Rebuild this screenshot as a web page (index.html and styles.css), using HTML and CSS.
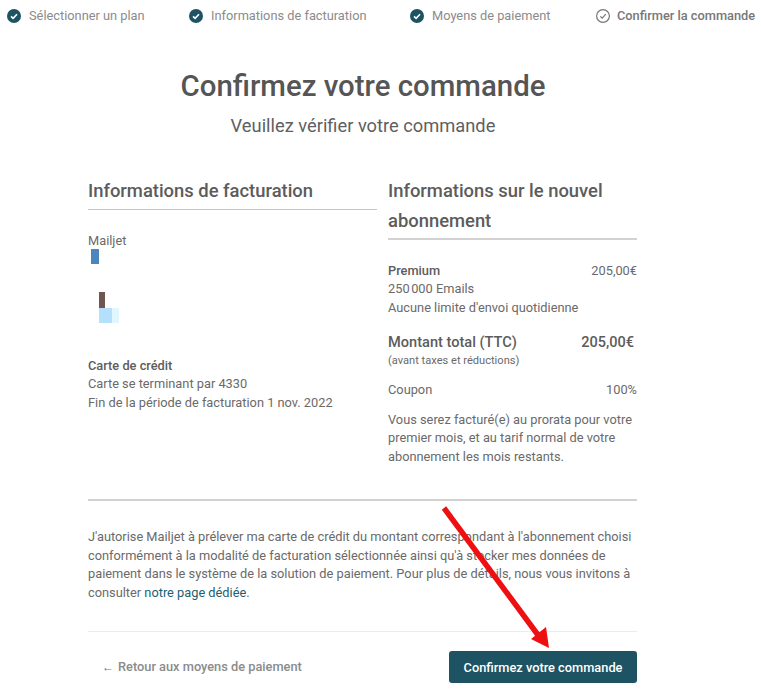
FILE: index.html
```html
<!DOCTYPE html>
<html lang="fr">
<head>
<meta charset="utf-8">
<title>Confirmez votre commande</title>
<link rel="stylesheet" href="styles.css">
</head>
<body>
<nav class="stepper">
  <div class="step s1"><svg class="ic" viewBox="0 0 14 14"><circle cx="7" cy="7" r="7" fill="#1d5362"/><path d="M4 7.3l2.1 2L10 5.2" fill="none" stroke="#fff" stroke-width="1.6"/></svg><span>Sélectionner un plan</span></div>
  <div class="step s2"><svg class="ic" viewBox="0 0 14 14"><circle cx="7" cy="7" r="7" fill="#1d5362"/><path d="M4 7.3l2.1 2L10 5.2" fill="none" stroke="#fff" stroke-width="1.6"/></svg><span>Informations de facturation</span></div>
  <div class="step s3"><svg class="ic" viewBox="0 0 14 14"><circle cx="7" cy="7" r="7" fill="#1d5362"/><path d="M4 7.3l2.1 2L10 5.2" fill="none" stroke="#fff" stroke-width="1.6"/></svg><span>Moyens de paiement</span></div>
  <div class="step current"><svg class="ic" viewBox="0 0 14 14"><circle cx="7" cy="7" r="6.4" fill="none" stroke="#777" stroke-width="1.2"/><path d="M4.3 7.3l1.9 1.9L9.8 5.2" fill="none" stroke="#777" stroke-width="1.2"/></svg><span>Confirmer la commande</span></div>
</nav>

<header class="head">
  <h1>Confirmez votre commande</h1>
  <p class="sub">Veuillez vérifier votre commande</p>
</header>

<main class="wrap">
  <div class="cols">
    <section class="left">
      <h2 class="h-left">Informations de facturation</h2>
      <div class="rule"></div>
      <p class="mailjet">Mailjet</p>
      <div class="redact">
        <i class="r-blue"></i>
        <i class="r-brown"></i>
        <div class="r-row"><i class="r-light"></i><i class="r-pale"></i></div>
      </div>
      <p class="line strong">Carte de crédit</p>
      <p class="line">Carte se terminant par 4330</p>
      <p class="line">Fin de la période de facturation 1 nov. 2022</p>
    </section>
    <section class="right">
      <h2>Informations sur le nouvel abonnement</h2>
      <div class="rule"></div>
      <div class="row plan"><span class="strong">Premium</span><span>205,00€</span></div>
      <p class="line">250&#8201;000 Emails</p>
      <p class="line">Aucune limite d'envoi quotidienne</p>
      <div class="row total"><span class="tlabel">Montant total (TTC)</span><span class="tval">205,00€</span></div>
      <p class="small">(avant taxes et réductions)</p>
      <div class="row coupon"><span>Coupon</span><span>100%</span></div>
      <p class="note">Vous serez facturé(e) au prorata pour votre premier mois, et au tarif normal de votre abonnement les mois restants.</p>
    </section>
  </div>
  <div class="rule wide"></div>
  <p class="legal">J'autorise Mailjet à prélever ma carte de crédit du montant correspondant à l'abonnement choisi conformément à la modalité de facturation sélectionnée ainsi qu'à stocker mes données de paiement dans le système de la solution de paiement. Pour plus de détails, nous vous invitons à consulter <a href="#">notre page dédiée</a>.</p>
  <div class="rule faint"></div>
  <div class="actions">
    <a class="back" href="#"><span class="arr">←</span>Retour aux moyens de paiement</a>
    <button class="cta">Confirmez votre commande</button>
  </div>
</main>

<svg class="annot" viewBox="0 0 761 689" aria-hidden="true">
  <line x1="444" y1="508" x2="538" y2="635" stroke="#ee0f10" stroke-width="5.5"/>
  <polygon points="549,648 531,639 546,627" fill="#ee0f10"/>
</svg>
</body>
</html>
```
FILE: styles.css
```css
* { box-sizing: border-box; }
html, body { margin: 0; padding: 0; }
body {
  width: 761px;
  height: 689px;
  overflow: hidden;
  position: relative;
  background: #fff;
  color: #6a6a6a;
  font-family: Roboto, "Liberation Sans", sans-serif;
  font-size: 12.8px;
  line-height: 19px;
}
p, h1, h2 { margin: 0; }

.stepper { display: flex; padding: 8px 0 0 7px; height: 31px; }
.step { display: flex; align-items: center; gap: 8px; color: #8b8b8b; font-size: 12.8px; height: 15px; white-space: nowrap; }
.ic { width: 14px; height: 14px; flex: none; }
.s1 { width: 182px; }
.s2 { width: 221px; }
.s3 { width: 186px; }
.current { color: #777; font-weight: 500; gap: 7px; }

.head { text-align: center; padding: 0 35px 0 0; }
h1 { font-size: 29.4px; font-weight: 500; line-height: 34px; color: #555; margin-top: 38px; }
.sub { font-size: 18.3px; line-height: 24px; margin-top: 11px; color: #5f5f5f; }

.wrap { width: 549px; margin-left: 88px; }
.cols { display: flex; margin-top: 38px; }
.left { width: 300px; flex: none; }
.right { width: 249px; flex: none; }
h2 { font-size: 18.4px; font-weight: 500; line-height: 29.5px; color: #5c5c5c; }
.rule { height: 1px; background: #c4c4c4; }
.left .rule { width: 289px; }
.right .rule { height: 2px; background: #d2d2d2; }
.h-left { margin-bottom: 3px; }
.right h2 { margin-bottom: 3px; }
.mailjet { margin-top: 22px; line-height: 17px; }
.redact { height: 108px; padding: 0 0 0 3px; }
.redact i { display: block; }
.r-blue { width: 8px; height: 15px; background: #4d86bd; }
.r-brown { width: 6px; height: 16px; background: #705650; margin: 28px 0 0 8px; }
.r-row { display: flex; margin-left: 8px; }
.r-light { width: 13px; height: 15px; background: #b5e0fb; }
.r-pale { width: 7px; height: 15px; background: #e2f6fe; }
.line { line-height: 18.5px; }
.strong { font-weight: 500; color: #5c5c5c; }
.row { display: flex; justify-content: space-between; }
.plan { margin-top: 21.5px; line-height: 18.5px; }
.total { margin-top: 15.5px; font-weight: 500; color: #5c5c5c; line-height: 19px; }
.tlabel { font-size: 14.6px; }
.tval { font-size: 14.5px; padding-right: 3px; }
.small { font-size: 11.1px; line-height: 16px; margin-top: 1px; }
.coupon { margin-top: 12px; line-height: 18.5px; }
.note { margin-top: 11.5px; line-height: 18.5px; }
.rule.wide { margin-top: 33px; height: 2px; background: #d2d2d2; }
.legal { margin-top: 27px; line-height: 18.5px; }
.legal a { color: #1d5f70; text-decoration: none; }
.rule.faint { margin-top: 29px; background: #ececec; }
.actions { display: flex; justify-content: space-between; align-items: center; margin-top: 19px; }
.back { color: #8b8b8b; font-weight: 500; text-decoration: none; margin-left: 14px; }
.arr { font-size: 12px; margin-right: 4px; color: #777; }
.cta {
  width: 188px; height: 32px; border: 0; border-radius: 3px;
  background: #1d5362; color: #fff; font: 500 12.8px Roboto, "Liberation Sans", sans-serif;
}
.annot { position: absolute; left: 0; top: 0; width: 761px; height: 689px; pointer-events: none; }
```
